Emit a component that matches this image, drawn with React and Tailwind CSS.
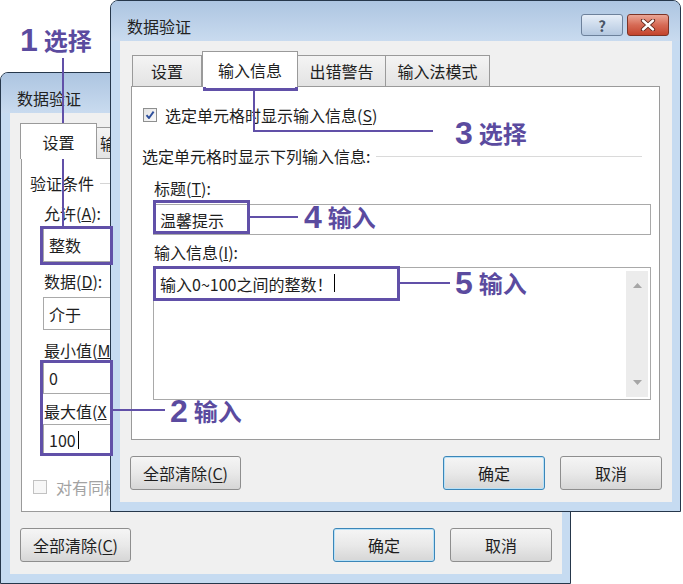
const ui = "font-['Noto_Sans_CJK_SC',sans-serif]";

function Btn({ children, primary, className }) {
  return (
    <div
      className={`flex h-[34px] items-center justify-center rounded-[3px] border bg-gradient-to-b from-[#f5f5f5] via-[#e9e9e9] to-[#d6d6d6] text-[16px] leading-5 text-[#1e1e1e] ${
        primary ? 'border-[#3b86b8] shadow-[inset_0_0_0_1px_#b9e1f7]' : 'border-[#8e8e8e]'
      } ${className}`}
    >
      {children}
    </div>
  );
}

function Caption() {
  return (
    <div className="mr-[11px] mt-[13px] flex gap-[4px]">
      <div className="flex h-[22px] w-[42px] items-center justify-center rounded-[3px] border border-[#6d819b] bg-gradient-to-b from-[#e6eef8] to-[#b4c8e0] text-[15px] font-bold leading-none text-[#4a5566]">
        ?
      </div>
      <div className="flex h-[22px] w-[42px] items-center justify-center rounded-[3px] border border-[#7d3426] bg-gradient-to-b from-[#eaa696] via-[#d66a55] to-[#c3432c]">
        <svg width="16" height="12" viewBox="0 0 16 12">
          <path d="M3 1.5 L13 10.5 M13 1.5 L3 10.5" stroke="#5b2217" strokeWidth="4.2" strokeLinecap="round" />
          <path d="M3 1.5 L13 10.5 M13 1.5 L3 10.5" stroke="#fff" strokeWidth="2.4" strokeLinecap="round" />
        </svg>
      </div>
    </div>
  );
}

function Dialog({ className, tabs, tabPad, caption, children }) {
  return (
    <div className={`absolute flex h-[512px] w-[571px] flex-col rounded-t-[8px] border border-[#26374b] bg-[#c6dbf1] ${ui} ${className}`}>
      <div className="flex h-[40px] justify-between rounded-t-[7px] bg-gradient-to-b from-[#adc5e1] to-[#c9dbef]">
        <span className="ml-[16px] mt-[15px] text-[16px] leading-5 text-[#222]">数据验证</span>
        {caption && <Caption />}
      </div>
      <div className="ml-[9px] flex h-[461px] w-[552px] flex-col bg-[#f0f0f0]">
        <div className={`flex h-[45px] items-end ${tabPad}`}>
          {tabs.map((t, i) =>
            t.sel ? (
              <div
                key={i}
                className={`relative z-10 -mb-px flex h-[36px] items-center justify-center border border-b-0 border-[#9a9a9a] bg-white text-[16px] leading-5 text-[#1e1e1e] ${t.w}`}
              >
                {t.label}
              </div>
            ) : (
              <div
                key={i}
                className={`-ml-px flex h-[31px] items-center border border-b-0 border-[#9a9a9a] bg-gradient-to-b from-[#f4f4f4] to-[#e3e3e3] text-[16px] leading-5 text-[#1e1e1e] ${
                  t.left ? 'justify-start pl-[3px]' : 'justify-center'
                } ${t.w}`}
              >
                {t.label}
              </div>
            )
          )}
        </div>
        <div className="ml-[11px] h-[354px] w-[529px] border border-[#9a9a9a] bg-white">{children}</div>
        <div className="mt-[16px] flex">
          <Btn className="ml-[10px] w-[111px]">
            全部清除(<span className="underline underline-offset-2">C</span>)
          </Btn>
          <Btn primary className="ml-[202px] w-[102px]">
            确定
          </Btn>
          <Btn className="ml-[15px] w-[102px]">取消</Btn>
        </div>
      </div>
    </div>
  );
}

function Label({ children, className = '' }) {
  return <div className={`h-5 whitespace-nowrap text-[16px] leading-5 text-[#1e1e1e] ${className}`}>{children}</div>;
}

function Field({ children, className = '' }) {
  return (
    <div className={`flex items-center border border-[#a9a9a9] bg-white pl-[5px] text-[16px] leading-5 text-[#1e1e1e] ${className}`}>
      {children}
    </div>
  );
}

const Caret = () => <span className="ml-[2px] inline-block h-[18px] w-px bg-black" />;

// only the strip left of the front dialog is visible, the rest of the back panel lies under it
function BackPanel() {
  return (
    <div className="flex w-[100px] flex-col overflow-hidden pt-[14px]">
      <div className="ml-[8px] flex items-center gap-[6px]">
        <Label>验证条件</Label>
        <div className="h-px w-[40px] shrink-0 bg-[#d5d5d5]" />
      </div>
      <Label className="ml-[22px] mt-[10px]">
        允许(<span className="underline">A</span>):
      </Label>
      <Field className="ml-[21px] mt-[5px] h-[34px] w-[170px] shrink-0">整数</Field>
      <Label className="ml-[22px] mt-[9px]">
        数据(<span className="underline">D</span>):
      </Label>
      <Field className="ml-[21px] mt-[6px] h-[33px] w-[170px] shrink-0">介于</Field>
      <Label className="ml-[22px] mt-[10px]">
        最小值(<span className="underline">M</span>
      </Label>
      <Field className="ml-[21px] mt-[2px] h-[32px] w-[170px] shrink-0">0</Field>
      <Label className="ml-[22px] mt-[7px]">
        最大值(<span className="underline">X</span>
      </Label>
      <Field className="ml-[21px] mt-[3px] h-[31px] w-[170px] shrink-0">
        100
        <Caret />
      </Field>
      <div className="ml-[11px] mt-[22px] flex h-5 items-center gap-[9px]">
        <div className="h-[14px] w-[14px] shrink-0 border border-[#c2c2c2] bg-[#f7f7f7]" />
        <span className="whitespace-nowrap text-[16px] leading-5 text-[#a3a3a3]">对有同样</span>
      </div>
    </div>
  );
}

function FrontPanel() {
  return (
    <div className="flex flex-col pt-[18px]">
      <div className="ml-[11px] flex h-5 items-center gap-[8px]">
        <div className="flex h-[14px] w-[14px] items-center justify-center border border-[#8e8f8f] bg-gradient-to-br from-[#e3e3e3] to-[#fbfbfb]">
          <svg width="10" height="10" viewBox="0 0 10 10">
            <path d="M1.5 5.2 L4 8 L8.6 1.6" fill="none" stroke="#2e4f9c" strokeWidth="1.9" strokeLinejoin="round" />
          </svg>
        </div>
        <span className="text-[16px] leading-5 text-[#1e1e1e]">
          选定单元格时显示输入信息(<span className="underline underline-offset-2">S</span>)
        </span>
      </div>
      <div className="ml-[10px] mt-[21px] flex items-center gap-[6px]">
        <Label>选定单元格时显示下列输入信息:</Label>
        <div className="h-px w-[266px] bg-[#dadada]" />
      </div>
      <Label className="ml-[22px] mt-[12px]">
        标题(<span className="underline">T</span>):
      </Label>
      <Field className="ml-[21px] mt-[6px] h-[31px] w-[498px] pl-[6px]">温馨提示</Field>
      <Label className="ml-[22px] mt-[7px]">
        输入信息(<span className="underline">I</span>):
      </Label>
      <div className="ml-[21px] mt-[5px] flex h-[133px] w-[498px] border border-[#a9a9a9] bg-white">
        <div className="flex flex-1 items-start pl-[6px] pt-[6px] text-[16px] leading-5 text-[#1e1e1e]">
          输入0~100之间的整数！
          <Caret />
        </div>
        <div className="mb-[2px] mr-[2px] mt-[3px] flex w-[22px] flex-col items-center justify-between bg-[#ececec] py-[12px]">
          <svg width="9" height="5" viewBox="0 0 9 5">
            <path d="M0 5 L4.5 0 L9 5 Z" fill="#a6a6a6" />
          </svg>
          <svg width="9" height="5" viewBox="0 0 9 5">
            <path d="M0 0 L4.5 5 L9 0 Z" fill="#a6a6a6" />
          </svg>
        </div>
      </div>
    </div>
  );
}

function Note({ n, text, className }) {
  return (
    <div className={`absolute flex h-[34px] items-center gap-[6px] text-[#5b4b9f] ${className}`}>
      <span className="font-['Liberation_Sans',sans-serif] text-[32px] font-bold leading-none">{n}</span>
      <span className={`${ui} text-[24px] font-bold leading-none`}>{text}</span>
    </div>
  );
}

export default function App() {
  return (
    <div className="relative h-[584px] w-[683px] overflow-hidden bg-white">
      <Dialog
        className="left-0 top-[72px]"
        tabPad="pl-[10px]"
        tabs={[
          { label: '设置', w: 'w-[77px]', sel: true },
          { label: '输', w: 'w-[93px]', left: true },
          { label: '', w: 'w-[89px]' },
          { label: '', w: 'w-[105px]' },
        ]}
      >
        <BackPanel />
      </Dialog>
      <Dialog
        className="left-[110px] top-0"
        tabPad="pl-[13px]"
        caption
        tabs={[
          { label: '设置', w: 'w-[70px]' },
          { label: '输入信息', w: 'w-[96px]', sel: true },
          { label: '出错警告', w: 'w-[89px]' },
          { label: '输入法模式', w: 'w-[105px]' },
        ]}
      >
        <FrontPanel />
      </Dialog>

      {/* annotation boxes and leader lines */}
      <div className="absolute left-[203px] top-[52px] h-[39px] w-[95px] border-[3px] border-[#6150a8]" />
      <div className="absolute left-[153px] top-[200px] h-[34px] w-[97px] border-[3px] border-[#6150a8]" />
      <div className="absolute left-[153px] top-[266px] h-[35px] w-[247px] border-[3px] border-[#6150a8]" />
      <div className="absolute left-[40px] top-[226px] h-[39px] w-[73px] border-[3px] border-[#6150a8]" />
      <div className="absolute left-[40px] top-[360px] h-[96px] w-[73px] border-[3px] border-[#6150a8]" />

      <div className="absolute left-[62px] top-[58px] h-[168px] w-[2px] bg-[#6150a8]" />
      <div className="absolute left-[253px] top-[91px] h-[41px] w-[2px] bg-[#6150a8]" />
      <div className="absolute left-[253px] top-[130px] h-[2px] w-[180px] bg-[#6150a8]" />
      <div className="absolute left-[250px] top-[216px] h-[2px] w-[48px] bg-[#6150a8]" />
      <div className="absolute left-[400px] top-[282px] h-[2px] w-[50px] bg-[#6150a8]" />
      <div className="absolute left-[113px] top-[409px] h-[2px] w-[52px] bg-[#6150a8]" />

      <Note n="1" text="选择" className="left-[20px] top-[23px]" />
      <Note n="2" text="输入" className="left-[170px] top-[394px]" />
      <Note n="3" text="选择" className="left-[455px] top-[116px]" />
      <Note n="4" text="输入" className="left-[304px] top-[200px]" />
      <Note n="5" text="输入" className="left-[455px] top-[266px]" />
    </div>
  );
}
